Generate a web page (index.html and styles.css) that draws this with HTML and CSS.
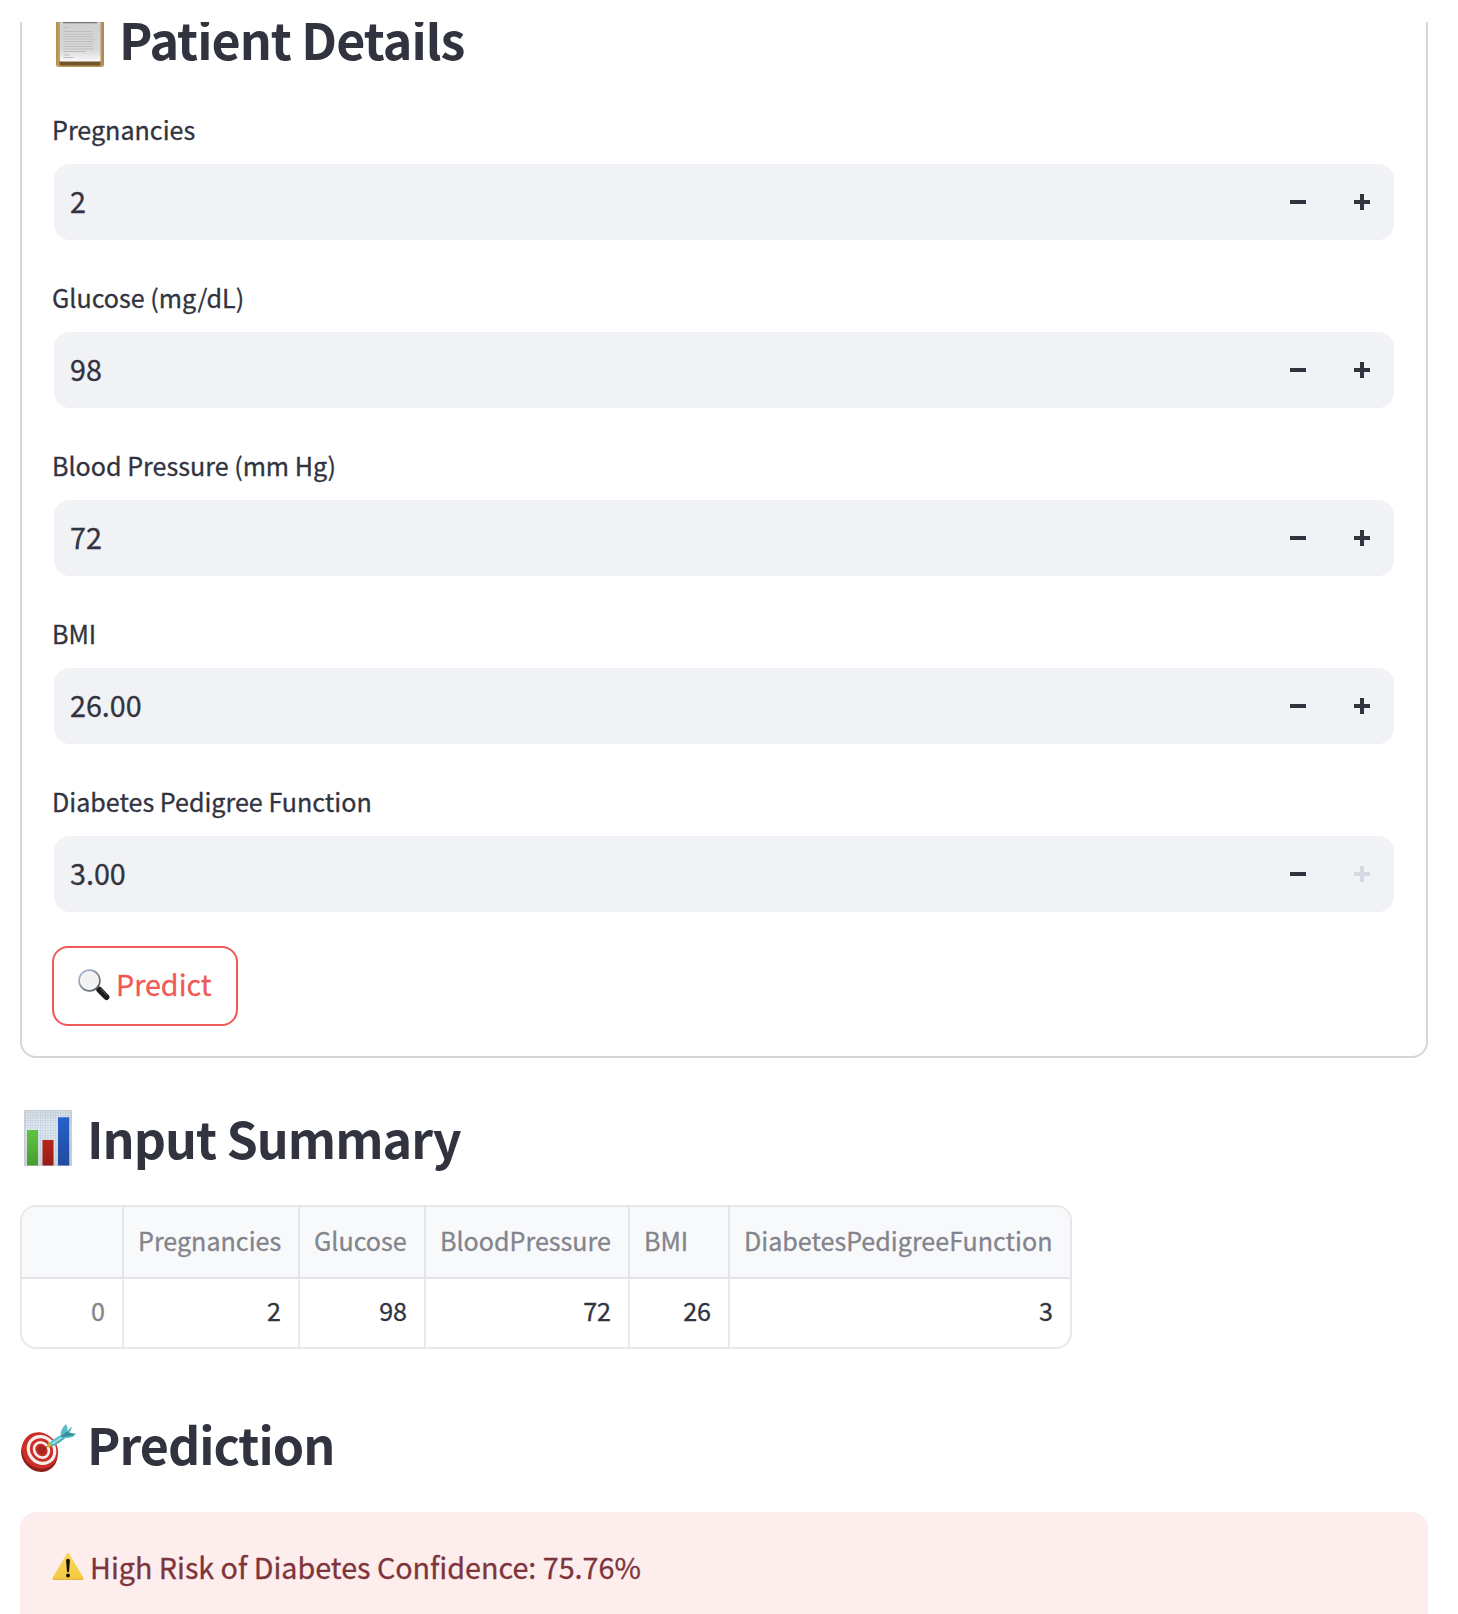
FILE: index.html
```html
<!DOCTYPE html>
<html lang="en">
<head>
<meta charset="utf-8">
<title>Diabetes Prediction</title>
<link rel="stylesheet" href="styles.css">
</head>
<body>
<main class="page">
  <form class="patient-form">
    <h2 class="heading">
      <svg class="heading-icon" viewBox="0 0 56 56" aria-hidden="true">
        <defs>
          <linearGradient id="board" x1="0" x2="1" y1="0" y2="0"><stop offset="0" stop-color="#b08c54"/><stop offset=".06" stop-color="#c29b5e"/><stop offset=".94" stop-color="#bd965a"/><stop offset="1" stop-color="#a98551"/></linearGradient>
          <linearGradient id="sheet" x1="0" x2="0" y1="0" y2="1"><stop offset="0" stop-color="#cfcfcf"/><stop offset=".75" stop-color="#dadada"/><stop offset="1" stop-color="#fbfbfb"/></linearGradient>
        </defs>
        <rect x="4" y="0" width="48" height="56" rx="3" fill="url(#board)"/>
        <path d="M7.500 50h41v3q0 1.500-1.500 1.500H9q-1.500 0-1.500-1.500z" fill="#74542a"/>
        <rect x="8" y="8" width="40.500" height="42.500" fill="url(#sheet)"/>
        <path d="M11 11.500h34" stroke="#77706c" stroke-width="1.400"/>
        <path d="M11.500 16.500h6M11.500 20.500h28M11.500 23h30M11.500 25.500h29M11.500 28h31M11.500 30.500h30M11.500 33h30M11.500 35.500h29M11.500 38h30M11.500 40.500h22M11.500 44h6M11.500 46.500h10" stroke="#bebebe" stroke-width="1"/>
      </svg>
      <span>Patient Details</span>
    </h2>

    <div class="field">
      <label class="label" for="pregnancies">Pregnancies</label>
      <div class="number-input">
        <span class="value" id="pregnancies">2</span>
        <svg class="step" viewBox="0 0 16 16"><path d="M0 6h16v4H0z"/></svg>
        <svg class="step" viewBox="0 0 16 16"><path d="M6 0h4v6h6v4h-6v6H6v-6H0V6h6z"/></svg>
      </div>
    </div>
    <div class="field">
      <label class="label" for="glucose">Glucose (mg/dL)</label>
      <div class="number-input">
        <span class="value" id="glucose">98</span>
        <svg class="step" viewBox="0 0 16 16"><path d="M0 6h16v4H0z"/></svg>
        <svg class="step" viewBox="0 0 16 16"><path d="M6 0h4v6h6v4h-6v6H6v-6H0V6h6z"/></svg>
      </div>
    </div>
    <div class="field">
      <label class="label" for="pressure">Blood Pressure (mm Hg)</label>
      <div class="number-input">
        <span class="value" id="pressure">72</span>
        <svg class="step" viewBox="0 0 16 16"><path d="M0 6h16v4H0z"/></svg>
        <svg class="step" viewBox="0 0 16 16"><path d="M6 0h4v6h6v4h-6v6H6v-6H0V6h6z"/></svg>
      </div>
    </div>
    <div class="field">
      <label class="label" for="bmi">BMI</label>
      <div class="number-input">
        <span class="value" id="bmi">26.00</span>
        <svg class="step" viewBox="0 0 16 16"><path d="M0 6h16v4H0z"/></svg>
        <svg class="step" viewBox="0 0 16 16"><path d="M6 0h4v6h6v4h-6v6H6v-6H0V6h6z"/></svg>
      </div>
    </div>
    <div class="field">
      <label class="label" for="pedigree">Diabetes Pedigree Function</label>
      <div class="number-input">
        <span class="value" id="pedigree">3.00</span>
        <svg class="step" viewBox="0 0 16 16"><path d="M0 6h16v4H0z"/></svg>
        <svg class="step step-disabled" viewBox="0 0 16 16"><path d="M6 0h4v6h6v4h-6v6H6v-6H0V6h6z"/></svg>
      </div>
    </div>

    <button class="predict" type="button">
      <svg class="predict-icon" viewBox="0 0 32 32" aria-hidden="true">
        <defs>
          <linearGradient id="rim" x1="0" x2="1" y1="0" y2="1"><stop offset="0" stop-color="#a9c4e0"/><stop offset=".5" stop-color="#8b929b"/><stop offset="1" stop-color="#50555c"/></linearGradient>
        </defs>
        <path d="M18.500 18.500l4 4" stroke="#555" stroke-width="2.200"/>
        <path d="M21.200 20.600l7.200 7.400" stroke="#1b1c1e" stroke-width="6" stroke-linecap="round"/>
        <path d="M22.500 19.800l6.500 6.500" stroke="#65686c" stroke-width="1"/>
        <circle cx="11.500" cy="11.500" r="10.300" fill="#f3f3f4" stroke="url(#rim)" stroke-width="1.900"/>
        <circle cx="11.500" cy="11.500" r="9" fill="none" stroke="#fff" stroke-width=".8"/>
      </svg>
      <span>Predict</span>
    </button>
  </form>

  <section class="summary">
    <h2 class="heading">
      <svg class="heading-icon" viewBox="0 0 56 56" aria-hidden="true">
        <defs>
          <pattern id="grid" width="2.500" height="2.500" patternUnits="userSpaceOnUse"><path d="M0 .5h2.500M.5 0v2.500" stroke="#b9c8d6" stroke-width=".5"/></pattern>
          <linearGradient id="paper" x1="0" x2="0" y1="0" y2="1"><stop offset="0" stop-color="#d4dde4"/><stop offset=".3" stop-color="#e4eef7"/><stop offset="1" stop-color="#d3d9df"/></linearGradient>
          <linearGradient id="green" x1="0" x2="0" y1="0" y2="1"><stop offset="0" stop-color="#5dc541"/><stop offset="1" stop-color="#489d30"/></linearGradient>
          <linearGradient id="red" x1="0" x2="0" y1="0" y2="1"><stop offset="0" stop-color="#b8241b"/><stop offset="1" stop-color="#961d14"/></linearGradient>
          <linearGradient id="blue" x1="0" x2="0" y1="0" y2="1"><stop offset="0" stop-color="#2860cb"/><stop offset="1" stop-color="#204c9e"/></linearGradient>
        </defs>
        <rect x="4" width="48" height="56" fill="url(#paper)"/>
        <rect x="4" width="48" height="56" fill="url(#grid)"/>
        <rect x="4.500" y=".5" width="47" height="55" fill="none" stroke="#c8cdd1"/>
        <rect x="7" y="20" width="11" height="35.500" fill="url(#green)"/>
        <rect x="22.500" y="30" width="11" height="25.500" fill="url(#red)"/>
        <rect x="38" y="7.300" width="11.300" height="48.200" fill="url(#blue)"/>
      </svg>
      <span>Input Summary</span>
    </h2>
    <div class="table">
      <div class="cell head"></div>
      <div class="cell head">Pregnancies</div>
      <div class="cell head">Glucose</div>
      <div class="cell head">BloodPressure</div>
      <div class="cell head">BMI</div>
      <div class="cell head">DiabetesPedigreeFunction</div>
      <div class="cell index">0</div>
      <div class="cell">2</div>
      <div class="cell">98</div>
      <div class="cell">72</div>
      <div class="cell">26</div>
      <div class="cell">3</div>
    </div>
  </section>

  <section class="prediction">
    <h2 class="heading">
      <svg class="heading-icon" viewBox="0 0 56 56" aria-hidden="true">
        <defs>
          <linearGradient id="dart" x1="0" x2="1" y1="0" y2="1"><stop offset="0" stop-color="#7fdbe3"/><stop offset="1" stop-color="#3298a5"/></linearGradient>
        </defs>
        <ellipse cx="19.300" cy="37.500" rx="17.300" ry="19.300" transform="rotate(-42 19.300 37.500)" fill="#8b1f1b"/>
        <ellipse cx="20" cy="34.500" rx="17.300" ry="19" transform="rotate(-42 20 34.500)" fill="#cb2f27"/>
        <g transform="rotate(-42 21.500 34)" fill="none">
          <ellipse cx="21.500" cy="34" rx="12.600" ry="14" stroke="#f7eeee" stroke-width="3.200"/>
          <ellipse cx="21.500" cy="34" rx="7" ry="8" fill="#c52b24" stroke="#f7eeee" stroke-width="2.600"/>
          <ellipse cx="21.800" cy="34" rx="3.500" ry="4" fill="#a92520"/>
        </g>
        <path d="M22.500 34l8-6" stroke="#7c2a1d" stroke-width="1"/>
        <path d="M27 31l1.500-5.500 4 4.500-4.500 1.500z" fill="#d9a32c"/>
        <path d="M29.500 27q5-6 13.500-8.500l2.500 3.500q-6 5.500-13 8.500z" fill="url(#dart)"/>
        <path d="M40.500 20q0-7 5.500-12 2 3 1.500 6.500l4.500-4q-.5 4-3 6.500l7 .5q-2 4-8.500 4.500-4 .5-7-2z" fill="#58bdc9"/>
        <path d="M41 20l6-4.500 8 3q-5 2-14 2.500z" fill="#388f9d"/>
        <path d="M32 28l9.500-6.500" stroke="#a7e8ec" stroke-width="1.500"/>
      </svg>
      <span>Prediction</span>
    </h2>
    <div class="alert">
      <svg class="alert-icon" viewBox="0 0 32 29" aria-hidden="true">
        <defs>
          <linearGradient id="warn" x1="0" x2="0" y1="0" y2="1"><stop offset="0" stop-color="#f9d75f"/><stop offset="1" stop-color="#f5ca40"/></linearGradient>
        </defs>
        <path d="M14.900 1.500q1.100-1.700 2.200 0L31.500 26q.8 1.700-1.200 1.700H1.700Q-.3 27.700.5 26z" fill="url(#warn)"/>
        <path d="M1.200 27.300h29.600" stroke="#dfae39" stroke-width=".9"/>
        <path d="M14.100 8.500q0-1.800 1.900-1.800t1.900 1.800l-.8 10.500q-.1 1.200-1.100 1.200t-1.100-1.200z" fill="#15130a"/>
        <circle cx="16" cy="23.500" r="2" fill="#15130a"/>
      </svg>
      <span>High Risk of Diabetes Confidence: 75.76%</span>
    </div>
  </section>
</main>
</body>
</html>
```
FILE: styles.css
```css
* { box-sizing: border-box; }

html, body { height: 100%; }

body {
  margin: 0;
  overflow: hidden;
  background: #fff;
  color: #31333f;
  font-family: "Noto Sans CJK SC", "Noto Sans", sans-serif;
  font-size: 28.7px;
  -webkit-text-stroke: 0.3px currentColor;
}

.page {
  height: 1614px;
  padding: 22px 30px 0 20px;
  overflow: hidden;
}

.patient-form {
  display: flex;
  flex-direction: column;
  height: 1036px;
  padding: 0 30px;
  border: 2px solid #d6d6d8;
  border-top: 0;
  border-radius: 0 0 16px 16px;
  overflow: hidden;
}

.heading {
  display: flex;
  align-items: flex-start;
  flex-shrink: 0;
  gap: 11px;
  height: 68px;
  margin: 0;
  font-size: 50.2px;
  font-weight: 700;
  letter-spacing: -1px;
  line-height: 68px;
  white-space: nowrap;
  -webkit-text-stroke: 0;
}

.patient-form .heading { margin-top: -18px; }

.heading-icon {
  flex: none;
  width: 56px;
  height: 56px;
  margin-top: 7px;
}

.field { margin-top: 36px; }

.label {
  display: block;
  height: 42px;
  font-size: 25.1px;
  line-height: 42px;
}

.number-input {
  display: flex;
  align-items: center;
  gap: 48px;
  height: 76px;
  margin: 14px 2px 0 2px;
  padding: 0 24px 0 16px;
  border-radius: 16px;
  background: #f0f2f6;
}

.value {
  flex: 1;
  line-height: 74px;
  height: 76px;
}

.step {
  width: 16px;
  height: 16px;
  fill: #31333f;
}

.step-disabled { fill: #d6dae5; }

.predict {
  display: flex;
  align-items: flex-start;
  width: 186px;
  height: 80px;
  margin-top: 34px;
  padding: 0 0 0 24px;
  border: 2px solid #ef5a56;
  border-radius: 16px;
  background: #fff;
  color: #ef5a56;
  font: inherit;
  line-height: 72px;
}

.predict-icon {
  width: 32px;
  height: 32px;
  margin: 21px 6px 0 0;
}

.summary { margin-top: 45px; }

.table {
  display: grid;
  grid-template-columns: 102px 176px 126px 204px 100px 340px;
  grid-template-rows: 72px 68px;
  width: 1052px;
  margin-top: 34px;
  border: 2px solid #e8e8ea;
  border-radius: 16px;
  overflow: hidden;
  font-size: 25.1px;
}

.cell {
  padding: 0 17px 0 14px;
  border-right: 2px solid #e8e8ea;
  line-height: 62px;
  text-align: right;
  white-space: nowrap;
}

.cell:nth-child(6n) { border-right: 0; }

.head {
  border-color: #e3e4e8;
  border-bottom: 2px solid #e3e4e8;
  background: #f8f9fb;
  color: #83848c;
  line-height: 66px;
  text-align: left;
}

.index { color: #83848c; }

.prediction { margin-top: 60px; }

.alert {
  display: flex;
  align-items: flex-start;
  height: 120px;
  margin-top: 35px;
  padding: 0 32px;
  border-radius: 16px;
  background: #fdeded;
  color: #7d353b;
  line-height: 110px;
}

.alert-icon {
  width: 32px;
  height: 29px;
  margin: 40px 6px 0 0;
}
```
